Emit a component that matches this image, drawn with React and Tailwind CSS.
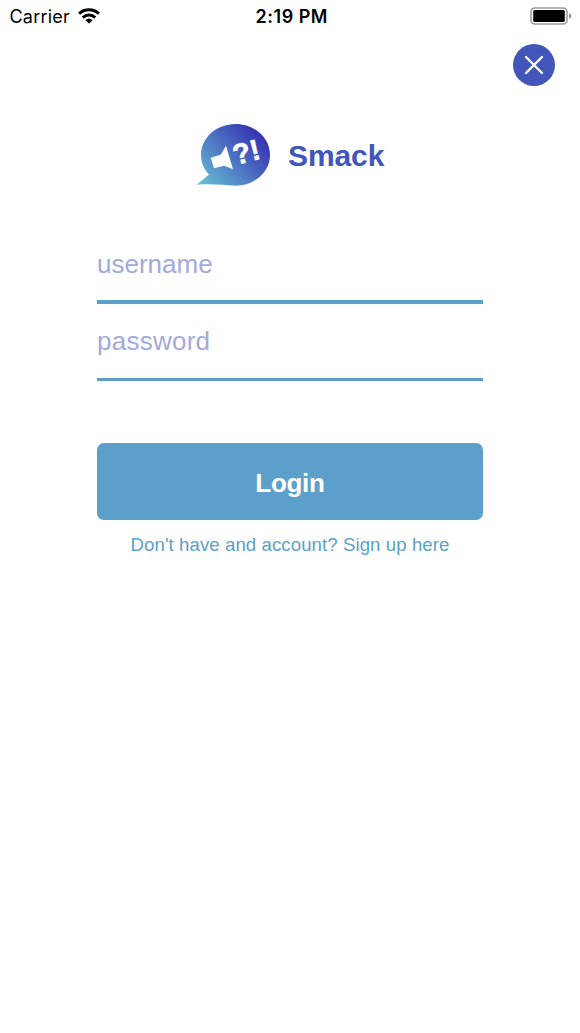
function StatusBar() {
  return (
    <header className="grid h-8 grid-cols-3 items-center pl-[9.5px] pr-[8px] text-black">
      <div className="flex items-center gap-[8px]">
        <span className="pt-px font-['Inter',sans-serif] text-[18px] leading-6 tracking-[0.2px]">Carrier</span>
        <svg width="22" height="16" viewBox="0 0 22 16" fill="none" stroke="#000" strokeWidth="3">
          <path d="M1.1 5.8C6.5 .4 15.5 .4 20.9 5.8" />
          <path d="M4.8 9.6C8.2 6.2 13.8 6.2 17.2 9.6" />
          <path d="M11 15.5 7.4 12.2Q11 9 14.6 12.2Z" fill="#000" stroke="none" />
        </svg>
      </div>
      <span className="pl-[2px] pt-px text-center font-['Inter',sans-serif] text-[18px] font-semibold leading-6 tracking-[0.5px]">2:19 PM</span>
      <svg className="justify-self-end" width="42" height="18" viewBox="0 0 42 18">
        <rect x="1" y="1" width="36" height="16" rx="3.8" fill="none" stroke="#999" strokeWidth="1.5" />
        <rect x="3.2" y="3" width="31.6" height="12" rx="1.5" />
        <path d="M39 6q2.4 1 2.4 3T39 12Z" fill="#999" />
      </svg>
    </header>
  );
}

function Logo() {
  return (
    <svg width="75" height="64" viewBox="0 0 75 64">
      <defs>
        <linearGradient id="bubble" x1="3" y1="60" x2="58" y2="8" gradientUnits="userSpaceOnUse">
          <stop offset="0" stopColor="#66bfd5" />
          <stop offset="1" stopColor="#3836b4" />
        </linearGradient>
      </defs>
      <path
        d="M39.5 1C58.6 1 74 14.9 74 32S58.6 62.8 39.5 62.8C28 62.3 17 60.5 .7 61.7L13 51.5C8 46.5 5 39.8 5 32 5 14.9 20.4 1 39.5 1Z"
        fill="url(#bubble)"
      />
      <path d="M14.7 34.7 24.7 31.7 30 22.7 37 46.3 28 42.7 18 45.3Z" fill="#fff" />
      <g fill="#fff" stroke="#fff" strokeWidth="0.5" fontFamily="Liberation Sans, sans-serif" fontWeight="700" fontSize="29">
        <text transform="translate(39.6 42.2) rotate(-14)">?</text>
        <text transform="translate(56.4 37.8) rotate(-14)">!</text>
      </g>
    </svg>
  );
}

export default function App() {
  return (
    <div className="flex h-[1033px] w-[580px] flex-col bg-white font-['Liberation_Sans',sans-serif]">
      <StatusBar />
      <div className="flex justify-end pr-[25.5px] pt-3">
        <button aria-label="Close" className="flex size-[42px] items-center justify-center rounded-full bg-[#4255b9]">
          <svg width="20" height="20" viewBox="0 0 20 20" fill="none" stroke="#fff" strokeWidth="2.4" strokeLinecap="round">
            <path d="M2 2 18 18M18 2 2 18" />
          </svg>
        </button>
      </div>
      <div className="mt-[37px] flex h-16 items-center gap-[17px] pl-[196px]">
        <Logo />
        <h1 className="pt-[2px] text-[30px] font-bold leading-[34px] tracking-[-0.1px] text-[#4255b9]">Smack</h1>
      </div>
      <main className="mx-[97px] mt-[41px] flex flex-col">
        <div className="flex h-[76px] items-center border-b-4 border-[#5b9fca] text-[26px] text-[#a1a9de]">username</div>
        <div className="flex h-[77px] items-center border-b-3 border-[#5b9fca] text-[26px] tracking-[0.25px] text-[#a1a9de]">password</div>
        <button className="mt-[62px] h-[77px] rounded-[7px] bg-[#5b9fca] pt-[3px] text-[26px] font-bold tracking-[-0.3px] text-white">Login</button>
        <a className="mt-[13px] text-center text-[18.6px] leading-6 tracking-[0.09px] text-[#5b9fca]">Don't have and account? Sign up here</a>
      </main>
    </div>
  );
}
